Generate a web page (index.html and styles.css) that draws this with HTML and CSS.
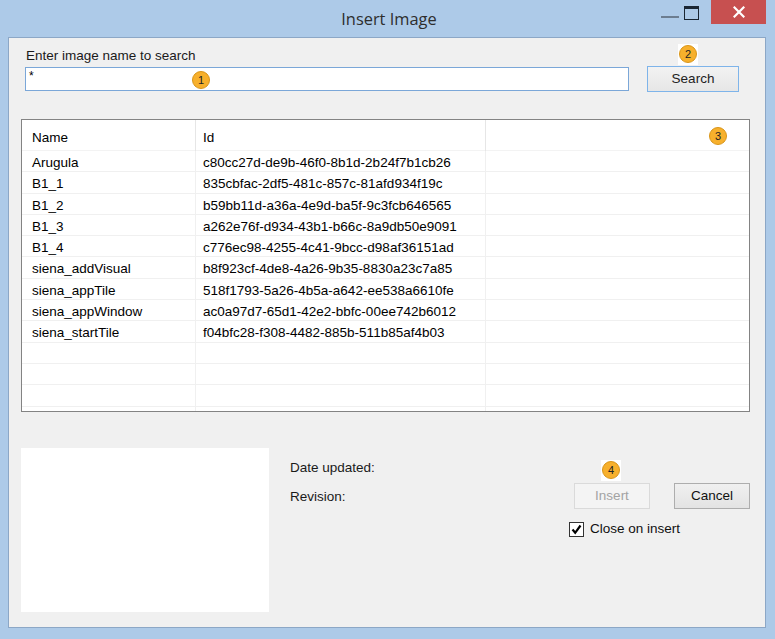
FILE: index.html
```html
<!DOCTYPE html>
<html>
<head>
<meta charset="utf-8">
<link rel="stylesheet" href="styles.css">
</head>
<body>
<div class="window">
  <div class="titlebar">
    <div></div>
    <div class="title">Insert Image</div>
    <div class="controls">
      <span class="ctl-min"></span>
      <span class="ctl-max"></span>
      <span class="ctl-close"><svg width="12" height="12" viewBox="0 0 12 12"><path d="M1.5 1.5 L10.5 10.5 M10.5 1.5 L1.5 10.5" stroke="#fff" stroke-width="2.2" stroke-linecap="square"/></svg></span>
    </div>
  </div>
  <div class="content">
    <div class="search-label">Enter image name to search</div>
    <div class="search-row">
      <div class="textbox">*</div>
      <div class="btn btn-default">Search</div>
    </div>
    <div class="list">
      <div class="row head">
        <div class="c1">Name</div><div class="c2">Id</div><div class="c3"></div>
      </div>
      <div class="row"><div class="c1">Arugula</div><div class="c2">c80cc27d-de9b-46f0-8b1d-2b24f7b1cb26</div><div class="c3"></div></div>
      <div class="row"><div class="c1">B1_1</div><div class="c2">835cbfac-2df5-481c-857c-81afd934f19c</div><div class="c3"></div></div>
      <div class="row"><div class="c1">B1_2</div><div class="c2">b59bb11d-a36a-4e9d-ba5f-9c3fcb646565</div><div class="c3"></div></div>
      <div class="row"><div class="c1">B1_3</div><div class="c2">a262e76f-d934-43b1-b66c-8a9db50e9091</div><div class="c3"></div></div>
      <div class="row"><div class="c1">B1_4</div><div class="c2">c776ec98-4255-4c41-9bcc-d98af36151ad</div><div class="c3"></div></div>
      <div class="row"><div class="c1">siena_addVisual</div><div class="c2">b8f923cf-4de8-4a26-9b35-8830a23c7a85</div><div class="c3"></div></div>
      <div class="row"><div class="c1">siena_appTile</div><div class="c2">518f1793-5a26-4b5a-a642-ee538a6610fe</div><div class="c3"></div></div>
      <div class="row"><div class="c1">siena_appWindow</div><div class="c2">ac0a97d7-65d1-42e2-bbfc-00ee742b6012</div><div class="c3"></div></div>
      <div class="row"><div class="c1">siena_startTile</div><div class="c2">f04bfc28-f308-4482-885b-511b85af4b03</div><div class="c3"></div></div>
      <div class="row"><div class="c1"></div><div class="c2"></div><div class="c3"></div></div>
      <div class="row"><div class="c1"></div><div class="c2"></div><div class="c3"></div></div>
      <div class="row"><div class="c1"></div><div class="c2"></div><div class="c3"></div></div>
      <div class="row"><div class="c1"></div><div class="c2"></div><div class="c3"></div></div>
    </div>
    <div class="bottom">
      <div class="preview"></div>
      <div class="info">
        <div class="info-line">Date updated:</div>
        <div class="info-line second">Revision:</div>
      </div>
      <div class="actions">
        <div class="buttons">
          <div class="btn btn-disabled">Insert</div>
          <div class="btn btn-normal">Cancel</div>
        </div>
        <div class="check-row">
          <span class="checkbox"><svg width="13" height="13" viewBox="0 0 13 13"><path d="M2.5 6.5 L5.2 9.8 L10.5 2.5" fill="none" stroke="#000" stroke-width="2.2"/></svg></span>
          <span>Close on insert</span>
        </div>
      </div>
    </div>
  </div>
  <span class="badge b1">1</span>
  <span class="badge-bg bg2"><span class="badge">2</span></span>
  <span class="badge b3">3</span>
  <span class="badge-bg bg4"><span class="badge">4</span></span>
</div>
</body>
</html>
```
FILE: styles.css
```css
html, body {
  margin: 0;
  padding: 0;
}
body {
  font-family: "Liberation Sans", Arial, sans-serif;
  font-size: 13.5px;
  color: #000;
}
.window {
  position: relative;
  width: 775px;
  height: 639px;
  background: #adcae8;
  display: flex;
  flex-direction: column;
  overflow: hidden;
}
.titlebar {
  height: 37px;
  flex: none;
  display: grid;
  grid-template-columns: 1fr auto 1fr;
}
.title {
  font-family: "Open Sans", "Liberation Sans", sans-serif;
  font-size: 16.4px;
  line-height: 38px;
  color: #2e2e2e;
  padding-left: 3px;
}
.controls {
  justify-self: end;
  display: flex;
  align-items: flex-start;
  margin-right: 9px;
}
.ctl-min {
  width: 18px;
  height: 2px;
  margin-top: 16px;
  background: #6c7d90;
}
.ctl-max {
  box-sizing: border-box;
  width: 15px;
  height: 14px;
  margin-top: 6px;
  margin-left: 5px;
  border: 1.5px solid #1a2633;
  border-top-width: 3px;
}
.ctl-close {
  width: 55px;
  height: 24px;
  margin-left: 12px;
  background: #c75050;
  display: flex;
  align-items: center;
  justify-content: center;
}
.content {
  flex: 1;
  margin: 0 9px 11px 8px;
  background: #f0f0f0;
  border: 1px solid #8ca7c6;
  display: flex;
  flex-direction: column;
}
.search-label {
  margin: 10px 0 0 17px;
  line-height: 16px;
  color: #1a1a1a;
}
.search-row {
  display: flex;
  align-items: center;
  margin: 2px 0 0 16px;
  height: 26px;
}
.textbox {
  box-sizing: border-box;
  width: 604px;
  height: 24px;
  background: #fff;
  border: 1px solid #7ba7d8;
  padding: 0 0 0 3px;
  line-height: 17px;
  font-size: 12px;
}
.btn {
  box-sizing: border-box;
  width: 76px;
  height: 26px;
  display: flex;
  align-items: center;
  justify-content: center;
  padding-bottom: 1px;
}
.btn-default {
  width: 92px;
  margin-left: 18px;
  border: 1px solid #7eb4ea;
  background: linear-gradient(#f2f2f2, #e6e6e6);
  color: #222;
}
.btn-normal {
  border: 1px solid #adadad;
  background: linear-gradient(#f0f0f0, #e3e3e3);
  color: #111;
}
.btn-disabled {
  border: 1px solid #dadada;
  background: #f4f4f4;
  color: #a3a3a3;
}
.list {
  box-sizing: border-box;
  margin: 27px 0 0 12px;
  width: 729px;
  height: 293px;
  background: #fff;
  border: 1px solid #838383;
  overflow: hidden;
}
.row {
  box-sizing: border-box;
  display: grid;
  grid-template-columns: 173px 290px 1fr;
  height: 21.3px;
  line-height: 20px;
  border-bottom: 1px solid #f0f0f0;
  white-space: nowrap;
}
.row > div {
  padding-top: 2px;
}
.row.head {
  height: 31px;
  line-height: 30px;
  border-bottom: 1px solid #f3f3f3;
}
.row.head > div {
  padding-top: 3px;
}
.c1 {
  padding-left: 10px;
}
.c2 {
  border-left: 1px solid #f0f0f0;
  padding-left: 7px;
}
.c3 {
  border-left: 1px solid #f0f0f0;
}
.head .c2, .head .c3 {
  border-left-color: #e6e6e6;
}
.bottom {
  display: flex;
  margin-top: 36px;
}
.preview {
  width: 248px;
  height: 164px;
  margin-left: 12px;
  background: #fff;
}
.info {
  margin-left: 21px;
  padding-top: 12px;
  color: #1a1a1a;
}
.info-line {
  line-height: 16px;
}
.info-line.second {
  margin-top: 13px;
}
.actions {
  margin-left: auto;
  margin-right: 15px;
  padding-top: 35px;
}
.buttons {
  display: flex;
  gap: 24px;
}
.check-row {
  display: flex;
  align-items: center;
  margin: 12px 0 0 -5px;
  line-height: 16px;
  color: #111;
}
.checkbox {
  box-sizing: border-box;
  width: 15px;
  height: 15px;
  border: 1px solid #333;
  background: #fff;
  margin-right: 6px;
  display: flex;
  align-items: center;
  justify-content: center;
}
.badge {
  position: absolute;
  box-sizing: border-box;
  width: 18px;
  height: 18px;
  border-radius: 50%;
  background: #f7b02c;
  border: 1px solid #d99518;
  font-family: "Liberation Sans", Arial, sans-serif;
  font-size: 11px;
  line-height: 16px;
  text-align: center;
  color: #222;
}
.badge-bg {
  position: absolute;
  width: 20px;
  height: 21px;
  background: #fff;
}
.badge-bg .badge {
  left: 1px;
  top: 1px;
}
.b1 { left: 192px; top: 71px; }
.bg2 { left: 678px; top: 44px; }
.b3 { left: 709px; top: 127px; }
.bg4 { left: 601px; top: 460px; }
```
